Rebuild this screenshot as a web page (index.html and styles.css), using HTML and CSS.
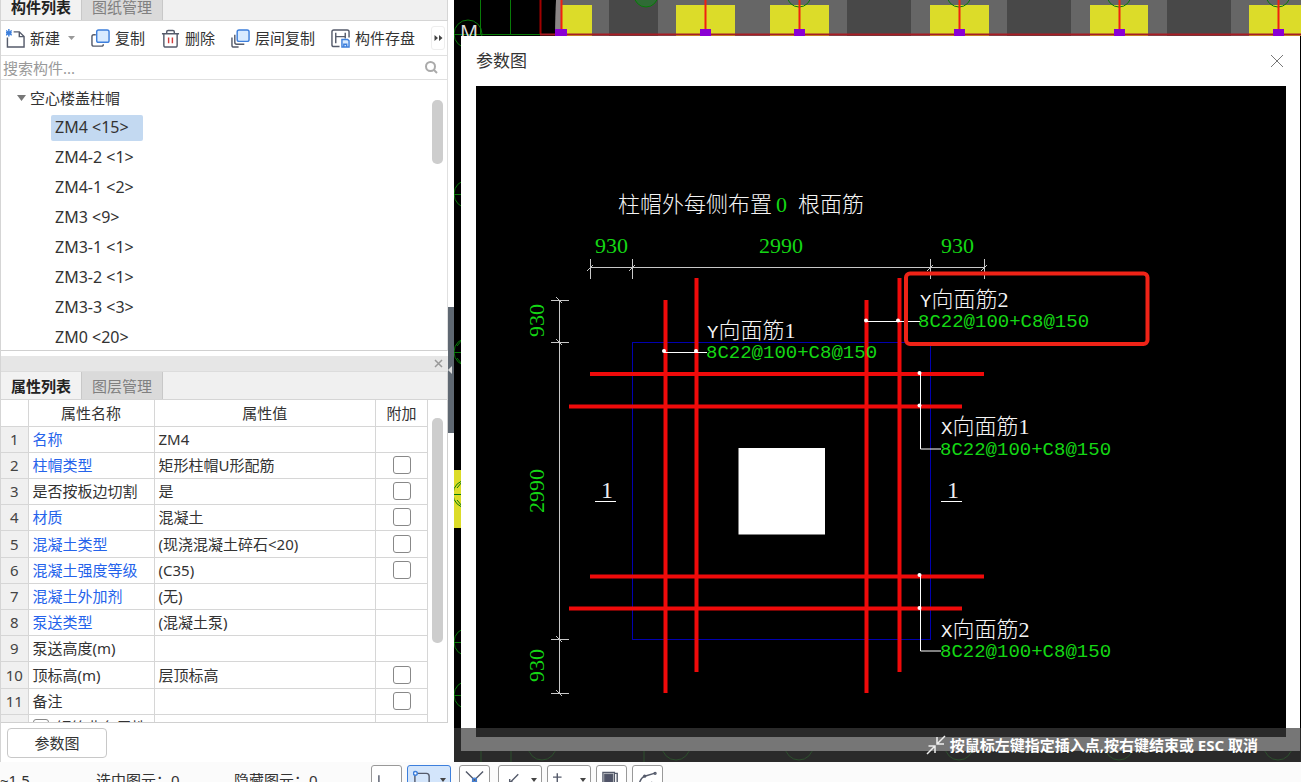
FILE: index.html
```html
<!DOCTYPE html>
<html lang="zh-CN">
<head>
<meta charset="utf-8">
<title>构件列表</title>
<link rel="stylesheet" href="styles.css">
</head>
<body>
<div class="app">
  <div class="workspace">
    <aside class="sidebar">
      <div class="tabs tabs-top">
        <button class="tab active">构件列表</button>
        <button class="tab">图纸管理</button>
      </div>
      <div class="toolbar">
        <button class="tool">
          <svg class="icon" viewBox="0 0 20 20"><path d="M8 3h6l5 5v11H1.500V9M14 3v5h5" class="ink"/><path d="M0 1.500l6 5M6 1.500l-6 5M3 0v8M0 4h6" class="blue"/></svg>
          <span>新建</span><svg class="caret" viewBox="0 0 7 4"><path d="M0 0h7L3.500 4z"/></svg>
        </button>
        <button class="tool">
          <svg class="icon" viewBox="0 0 20 20"><path d="M5 6H3q-2 0-2 2v8q0 2 2 2h8q2 0 2-2" class="ink"/><rect x="6" y="1" width="13" height="13" rx="2" class="blue tint"/></svg>
          <span>复制</span>
        </button>
        <button class="tool">
          <svg class="icon" viewBox="0 0 20 20"><path d="M1 5h18M6 5V3q0-1.500 1.500-1.500h5Q14 1.500 14 3v2M3 5v12q0 2 2 2h10q2 0 2-2V5" class="ink"/><path d="M8 9v6M12 9v6" class="red"/></svg>
          <span>删除</span>
        </button>
        <button class="tool">
          <svg class="icon" viewBox="0 0 20 20"><path d="M1 9v8q0 2 2 2h5M4 6v8q0 2 2 2h8" class="ink"/><rect x="6.500" y="1" width="12.500" height="12" rx="2" class="blue tint"/></svg>
          <span>层间复制</span>
        </button>
        <button class="tool">
          <svg class="icon" viewBox="0 0 20 20"><path d="M9 18.500H3q-2 0-2-2V3q0-2 2-2h14q2 0 2 2v6M5 4v11M5 8h10M15 4v6" class="ink"/><path d="M11.500 11h6l1.500 1.500V19h-7.500zM13.500 19v-3h3v3" class="blue tint"/></svg>
          <span>构件存盘</span>
        </button>
        <button class="more" aria-label="更多"><svg viewBox="0 0 8 6"><path d="M0 0l3.500 3L0 6zM4.500 0L8 3 4.500 6z"/></svg></button>
      </div>
      <div class="search">
        <input type="text" placeholder="搜索构件..." aria-label="搜索构件">
        <svg viewBox="0 0 13 13"><circle cx="5.500" cy="5.500" r="4.500"/><path d="M9 9l3 3"/></svg>
      </div>
      <div class="tree">
        <div class="tree-body">
          <div class="node root"><svg class="fold" viewBox="0 0 9 6"><path d="M0 0h9L4.500 6z"/></svg>空心楼盖柱帽</div>
          <ul class="children">
            <li class="node"><span class="name selected">ZM4 &lt;15&gt;</span></li>
            <li class="node"><span class="name">ZM4-2 &lt;1&gt;</span></li>
            <li class="node"><span class="name">ZM4-1 &lt;2&gt;</span></li>
            <li class="node"><span class="name">ZM3 &lt;9&gt;</span></li>
            <li class="node"><span class="name">ZM3-1 &lt;1&gt;</span></li>
            <li class="node"><span class="name">ZM3-2 &lt;1&gt;</span></li>
            <li class="node"><span class="name">ZM3-3 &lt;3&gt;</span></li>
            <li class="node"><span class="name">ZM0 &lt;20&gt;</span></li>
          </ul>
        </div>
        <div class="scroll"><div class="thumb thumb-tree"></div></div>
      </div>
      <div class="dock-bar"><button class="dock-close" aria-label="关闭"><svg viewBox="0 0 9 9"><path d="M1 1l7 7M8 1L1 8"/></svg></button></div>
      <div class="tabs">
        <button class="tab active">属性列表</button>
        <button class="tab">图层管理</button>
      </div>
      <div class="props">
        <div class="props-body">
          <table class="grid">
            <colgroup><col class="c-num"><col class="c-name"><col><col class="c-add"></colgroup>
            <thead><tr><th></th><th>属性名称</th><th>属性值</th><th>附加</th></tr></thead>
            <tbody>
              <tr><td>1</td><td class="key">名称</td><td>ZM4</td><td></td></tr>
              <tr><td>2</td><td class="key">柱帽类型</td><td>矩形柱帽U形配筋</td><td><input type="checkbox" aria-label="附加 柱帽类型"></td></tr>
              <tr><td>3</td><td>是否按板边切割</td><td>是</td><td><input type="checkbox" aria-label="附加 是否按板边切割"></td></tr>
              <tr><td>4</td><td class="key">材质</td><td>混凝土</td><td><input type="checkbox" aria-label="附加 材质"></td></tr>
              <tr><td>5</td><td class="key">混凝土类型</td><td>(现浇混凝土碎石&lt;20)</td><td><input type="checkbox" aria-label="附加 混凝土类型"></td></tr>
              <tr><td>6</td><td class="key">混凝土强度等级</td><td>(C35)</td><td><input type="checkbox" aria-label="附加 混凝土强度等级"></td></tr>
              <tr><td>7</td><td class="key">混凝土外加剂</td><td>(无)</td><td></td></tr>
              <tr><td>8</td><td class="key">泵送类型</td><td>(混凝土泵)</td><td></td></tr>
              <tr><td>9</td><td>泵送高度(m)</td><td></td><td></td></tr>
              <tr><td>10</td><td>顶标高(m)</td><td>层顶标高</td><td><input type="checkbox" aria-label="附加 顶标高"></td></tr>
              <tr><td>11</td><td>备注</td><td></td><td><input type="checkbox" aria-label="附加 备注"></td></tr>
              <tr><td></td><td><label class="group"><input type="checkbox">钢筋业务属性</label></td><td></td><td></td></tr>
            </tbody>
          </table>
        </div>
        <div class="scroll"><div class="thumb thumb-props"></div></div>
      </div>
      <div class="actions"><button class="param">参数图</button></div>
    </aside>
    <div class="splitter"><button class="collapse" aria-label="折叠"><svg viewBox="0 0 4 8"><path d="M4 0v8L0 4z"/></svg></button></div>
    <main class="canvas">
      <svg class="plan" viewBox="454 0 847 762" preserveAspectRatio="xMinYMin slice">
        <path d="M556 0h745v36H555z" fill="#666"/>
        <path d="M556 0h5v36h-6z" fill="#8a8585"/>
        <path d="M609 0h49v36h-49zM847 0h64v36h-64zM1007 0h64v36h-64zM1167 0h64v36h-64z" fill="#484848"/>
        <path d="M562 5h30v31h-30zM676 5h59v31h-59zM770 5h59v31h-59zM930 5h59v31h-59zM1090 5h58v31h-58zM1249 5h52v31h-52zM454 470h8v58h-8z" fill="#dcdc29"/>
        <g class="axis">
          <circle cx="468" cy="34" r="14"/><path d="M480.500 0v34M510.500 0v34M454 34.500h86"/>
          <circle cx="799" cy="-5" r="12"/><circle cx="959" cy="-5" r="12"/><circle cx="1119" cy="-5" r="12"/><circle cx="1278" cy="-5" r="12"/>
          <circle cx="646" cy="-5" r="12" class="axis-fill"/>
          <circle cx="468" cy="194" r="14"/><circle cx="468" cy="352" r="14"/><circle cx="467" cy="494" r="14"/><circle cx="468" cy="642" r="14"/><circle cx="468" cy="695" r="14"/>
          <path d="M454 194.500h8M454 352.500h8M454 494.500h8M454 642.500h8M454 695.500h8M457 488l5-6M457 500l5 6M457 346l5-6M457 358l5 6"/>
          <path d="M481 751v11M511 751v11M644 751v11"/>
          <circle cx="542" cy="746" r="14"/><circle cx="676" cy="746" r="14"/><circle cx="799" cy="746" r="14"/><circle cx="959" cy="746" r="14"/><circle cx="1119" cy="746" r="14"/><circle cx="1278" cy="746" r="14"/>
        </g>
        <path d="M540.500 0v34" stroke="#a00000" stroke-width="2"/>
        <path d="M540 34.500h761" stroke="#a81c24" stroke-width="2"/>
        <path d="M561.500 0v30M705.500 0v30M799.500 0v30M959.500 0v30M1119.500 0v30M1278.500 0v30" stroke="#f02010" stroke-width="2"/>
        <path d="M555 29h12v7h-12zM700 29h11v7h-11zM794 29h11v7h-11zM954 29h11v7h-11zM1114 29h11v7h-11zM1273 29h11v7h-11z" fill="#8a00d4"/>
        <text x="460" y="39" class="axis-name">M</text>
      </svg>
      <section class="dialog">
        <header class="dialog-head"><span>参数图</span>
          <button class="dialog-close" aria-label="关闭参数图"><svg viewBox="0 0 14 14"><path d="M1 1l12 12M13 1L1 13"/></svg></button>
        </header>
        <svg class="drawing" viewBox="476 86 810 651">
          <rect x="632.500" y="342.500" width="298" height="297" class="slab"/>
          <path class="bar" d="M665.500 300v393M696.500 278v394M866.500 300v393M899.500 278v394M590 374h394M569 406.500h393M590 576.500h394M569 608.500h393"/>
          <rect x="738.500" y="448" width="86.500" height="86.500" fill="#fff"/>
          <path class="dim" d="M590 267.500h394M590.500 259v20M632.500 259v20M930.500 259v20M984.500 259v20M559.500 300v394M551 300.500h18M551 342.500h18M551 639.500h18M551 693.500h18"/>
          <path class="dim" d="M587 271l6-6M629 271l6-6M927 271l6-6M981 271l6-6M556 297l6 6M556 339l6 6M556 636l6 6M556 690l6 6"/>
          <path class="lead" d="M664 352.500h43M866 321.500h54M920.500 373v76H941M920.500 575v76H941"/>
          <g fill="#fff"><circle cx="664" cy="351" r="2"/><circle cx="696" cy="351" r="2"/><circle cx="866" cy="320.500" r="2"/><circle cx="898" cy="320.500" r="2"/><circle cx="919.500" cy="373" r="2"/><circle cx="919.500" cy="405.500" r="2"/><circle cx="919.500" cy="575" r="2"/><circle cx="919.500" cy="608" r="2"/></g>
          <rect x="906" y="273.500" width="241.500" height="70.500" rx="4" class="mark"/>
          <text x="618" y="212" class="cad">柱帽外每侧布置</text><text x="776" y="212" class="size">0</text><text x="798" y="212" class="cad">根面筋</text>
          <text x="595" y="253" class="size">930</text><text x="759" y="253" class="size">2990</text><text x="941" y="253" class="size">930</text>
          <text transform="translate(544 337) rotate(-90)" class="size">930</text>
          <text transform="translate(544 513) rotate(-90)" class="size">2990</text>
          <text transform="translate(544 682) rotate(-90)" class="size">930</text>
          <text x="707" y="338" class="cad"><tspan class="mono">Y</tspan>向面筋<tspan class="digit">1</tspan></text><text x="706" y="358" class="val">8C22@100+C8@150</text>
          <text x="920" y="307" class="cad"><tspan class="mono">Y</tspan>向面筋<tspan class="digit">2</tspan></text><text x="918" y="327" class="val">8C22@100+C8@150</text>
          <text x="941" y="434" class="cad"><tspan class="mono">X</tspan>向面筋<tspan class="digit">1</tspan></text><text x="940" y="455" class="val">8C22@100+C8@150</text>
          <text x="941" y="637" class="cad"><tspan class="mono">X</tspan>向面筋<tspan class="digit">2</tspan></text><text x="940" y="657" class="val">8C22@100+C8@150</text>
          <text x="601" y="498" class="section">1</text><text x="947" y="498" class="section">1</text>
          <path class="lead" d="M595 501.500h21M941 501.500h21"/>
        </svg>
      </section>
      <div class="hint">
        <svg viewBox="0 0 20 20"><path d="M1 19l8-8M2.500 11H9v7M19 1l-8 8M11 2v7h7"/></svg>
        <span>按鼠标左键指定插入点,按右键结束或 ESC 取消</span>
      </div>
    </main>
  </div>
  <footer class="status">
    <div class="readouts"><span class="r-level">~1.5</span><span class="r-sel">选中图元：0</span><span>隐藏图元：0</span></div>
    <div class="snaps">
      <button class="snap" aria-label="正交"><svg viewBox="0 0 20 20"><path d="M2 5v10h8"/></svg></button>
      <button class="snap wide on" aria-label="捕捉"><svg viewBox="0 0 20 20"><path d="M4 3h10q3 0 3 3v12M2 5v14"/><circle cx="2.500" cy="3" r="2" class="blue tint"/></svg><svg class="drop" viewBox="0 0 6 4"><path d="M0 0h6L3 4z"/></svg></button>
      <button class="snap" aria-label="交点"><svg viewBox="0 0 20 20"><path d="M1 1l9 9 9-9M1 19l9-9 9 9"/><circle cx="10" cy="10" r="2" class="blue"/></svg></button>
      <button class="snap wide" aria-label="垂点"><svg viewBox="0 0 20 20"><path d="M15 4l-8 8M6 9v3h3"/></svg><svg class="drop" viewBox="0 0 6 4"><path d="M0 0h6L3 4z"/></svg></button>
      <button class="snap wide" aria-label="偏移"><svg viewBox="0 0 20 20"><path d="M0 7h9M4.500 3v9"/></svg><svg class="drop" viewBox="0 0 6 4"><path d="M0 0h6L3 4z"/></svg></button>
      <button class="snap" aria-label="图层"><svg viewBox="0 0 20 20"><path d="M1 2h12v17H1zM13 3h3v10h-3"/><path d="M3 4h8v13H3z" fill="#505468"/></svg></button>
      <button class="snap" aria-label="折线"><svg viewBox="0 0 20 20"><path d="M1 16q1-8 6-10l10-3M14 12l4 4"/><circle cx="7" cy="6" r="1"/><circle cx="18" cy="3" r="1"/></svg></button>
    </div>
  </footer>
</div>
</body>
</html>
```
FILE: styles.css
```css
* { box-sizing: border-box; }
body {
  margin: 0;
  font: 15px/20px "Noto Sans", "Noto Sans CJK SC", sans-serif;
  color: #333;
  background: #fff;
}
button, input { font: inherit; color: inherit; }
button { background: none; border: 0; padding: 0; }
svg { display: block; flex: none; }
.app { display: flex; flex-direction: column; height: 100vh; overflow: hidden; }
.workspace { flex: 1; min-height: 0; display: flex; }

.sidebar {
  width: 448px;
  flex: none;
  display: flex;
  flex-direction: column;
  border-left: 1px solid #d5d5d5;
}
.tabs {
  display: flex;
  flex: none;
  height: 29px;
  background: #f0f0f0;
  border-top: 1px solid #dcdcdc;
  border-bottom: 1px solid #d5d5d5;
  border-right: 1px solid #d5d5d5;
}
.tabs-top { height: 21px; align-items: flex-end; overflow: hidden; border-top: 0; }
.tab { height: 27px; width: 82px; color: #808080; background: #dadada; border-right: 1px solid #c8c8c8; border-left: 1px solid #c8c8c8; }
.tab.active { width: 80px; color: #222; font-weight: 600; background: #f2f2f2; border: 0; }

.toolbar {
  display: flex;
  align-items: center;
  flex: none;
  height: 35px;
  gap: 16px;
  padding: 0 2px 0 5px;
  border-bottom: 1px solid #e0e0e0;
  border-right: 1px solid #e0e0e0;
}
.tool { display: flex; align-items: center; gap: 5px; white-space: nowrap; }
.icon { width: 19px; height: 19px; }
.icon path, .icon rect { fill: none; stroke-width: 1.5; }
.icon .ink { stroke: #555b6b; }
.icon .blue { stroke: #3d7fdc; }
.icon .tint { fill: #d9ebff; }
.icon .red { stroke: #d23c3c; }
.caret { width: 7px; height: 4px; margin-left: 3px; fill: #999; }
.more { display: flex; align-items: center; justify-content: center; width: 14px; height: 24px; margin-left: auto; flex: none; border: 1px solid #eee; border-radius: 3px; }
.more svg { width: 9px; height: 6px; fill: #444; }

.search { display: flex; align-items: center; flex: none; height: 24px; padding: 0 9px 0 2px; border-bottom: 1px solid #e0e0e0; border-right: 1px solid #e0e0e0; }
.search input { flex: 1; min-width: 0; border: 0; padding: 0; outline: 0; background: none; }
.search input::placeholder { color: #999; opacity: 1; }
.search svg { width: 13px; height: 13px; fill: none; stroke: #aaa; stroke-width: 2; }

.tree { flex: 1; min-height: 0; display: flex; border-bottom: 1px solid #d0d0d0; border-right: 1px solid #e0e0e0; overflow: hidden; }
.tree-body { flex: 1; padding-top: 3px; }
.node { display: flex; align-items: center; height: 30px; }
.root { padding-left: 16px; gap: 4px; }
.fold { width: 9px; height: 6px; fill: #777; }
.children { margin: 0; padding: 0 0 0 50px; list-style: none; font-size: 16px; }
.name { height: 26px; line-height: 25px; padding: 0 14px 0 4px; }
.selected { background: #c3d9f1; border-radius: 2px; }
.scroll { width: 19px; flex: none; padding: 0 4px; }
.thumb { width: 11px; border-radius: 5px; background: #cdcdcd; }
.thumb-tree { height: 64px; margin-top: 20px; }
.thumb-props { height: 225px; margin-top: 18px; }

.dock-bar { display: flex; align-items: center; justify-content: flex-end; flex: none; height: 15px; margin-top: 5px; padding-right: 5px; background: #e6e6e6; }
.dock-close svg { width: 9px; height: 9px; stroke: #999; stroke-width: 1.5; }

.props { display: flex; flex: none; height: 323px; overflow: hidden; border-bottom: 1px solid #d0d0d0; border-right: 1px solid #d0d0d0; }
.props-body { flex: 1; min-width: 0; overflow: hidden; }
.grid { width: 100%; table-layout: fixed; border-collapse: collapse; }
.grid tr { height: 26px; }
.grid tbody tr:nth-child(5n) { height: 27px; }
.c-num { width: 27px; }
.c-name { width: 126px; }
.c-add { width: 52px; }
.grid th, .grid td { padding: 0 0 0 4px; font-weight: 400; text-align: left; white-space: nowrap; border: 1px solid #d6d6d6; border-left: 0; border-top: 0; }
.grid th { text-align: center; padding: 0; }
.grid td:first-child { padding: 0; text-align: center; background: #f0f0f0; color: #444; }
.grid td:last-child { padding: 0; text-align: center; }
.grid .key { color: #2563eb; }
input[type="checkbox"] { appearance: none; display: block; width: 18px; height: 18px; margin: 0 auto; border: 1px solid #888; border-radius: 3px; background: #fff; }
.group { display: flex; gap: 8px; align-items: center; }
.group input[type="checkbox"] { margin: 0; flex: none; width: 16px; height: 16px; }
.actions { flex: none; height: 39px; padding: 5px 6px; }
.param { width: 100px; height: 30px; border: 1px solid #c8c8c8; border-radius: 4px; }

.splitter { width: 6px; flex: none; display: flex; align-items: flex-start; }
.collapse { display: flex; align-items: center; width: 6px; height: 126px; margin-top: 307px; background: #5f6872; }
.collapse svg { width: 4px; height: 8px; fill: #ddd; }

.canvas { position: relative; flex: 1; min-width: 0; display: flex; background: #000; }
.plan { position: absolute; inset: 0; width: 100%; height: 100%; }
.axis { fill: none; stroke: #087a08; }
.axis-fill { fill: #2f6b35; }
.axis-name { font: 20px "Noto Sans", sans-serif; fill: #ddd; }
.dialog { position: relative; flex: 1; min-width: 0; display: flex; flex-direction: column; margin: 36px 1px 11px 7px; padding: 0 14px 14px 15px; background: #fff; }
.dialog-head { display: flex; align-items: center; justify-content: space-between; flex: none; height: 50px; padding-right: 2px; font-size: 17px; }
.dialog-close svg { width: 14px; height: 14px; stroke: #777; stroke-width: 1; }
.drawing { flex: 1; min-height: 0; width: 100%; background: #000; }
.slab { fill: none; stroke: #0000b0; }
.bar { stroke: #f00a0a; stroke-width: 4; fill: none; }
.dim { stroke: #c8c8c8; fill: none; }
.lead { stroke: #fff; fill: none; }
.mark { fill: none; stroke: #ef2317; stroke-width: 4; }
.cad { font: 300 22px "Noto Sans CJK SC", sans-serif; fill: #f4f4f4; }
.mono { font: 19px "Liberation Mono", monospace; }
.digit { font: 22px "Liberation Serif", serif; }
.val { font: 19px "Liberation Mono", monospace; fill: #14d614; }
.size { font: 22px "Liberation Serif", serif; fill: #14d614; }
.section { font: 24px "Liberation Serif", serif; fill: #eee; }
.hint { position: absolute; left: 0; right: 0; bottom: 0; height: 34px; display: flex; align-items: center; justify-content: flex-end; gap: 4px; padding-right: 43px; background: rgba(60, 60, 60, .7); color: #fff; font-weight: 700; white-space: nowrap; }
.hint svg { width: 20px; height: 20px; fill: none; stroke: #eee; stroke-width: 1.5; }

.status { flex: none; height: 20px; display: flex; align-items: flex-start; overflow: hidden; background: #fbfbfb; }
.readouts { display: flex; width: 371px; flex: none; padding-top: 8px; white-space: nowrap; }
.r-level { width: 96px; }
.r-sel { width: 138px; }
.snaps { display: flex; gap: 5px; padding-top: 3px; }
.snap { display: flex; align-items: center; gap: 8px; width: 31px; height: 30px; padding: 0 5px; border: 1px solid #999; border-radius: 3px; background: #fff; }
.snap.wide { width: 44px; }
.snap.on { background: #d3e5fb; border-color: #3d7fdc; margin-right: 3px; }
.snap:nth-child(3) { margin-right: 3px; }
.snap svg { width: 19px; height: 20px; fill: none; stroke: #555b6b; stroke-width: 1.5; }
.snap .blue { stroke: #3d7fdc; }
.snap .tint { fill: #fff; }
.snap .drop { width: 6px; height: 4px; fill: #444; stroke: none; }
```
